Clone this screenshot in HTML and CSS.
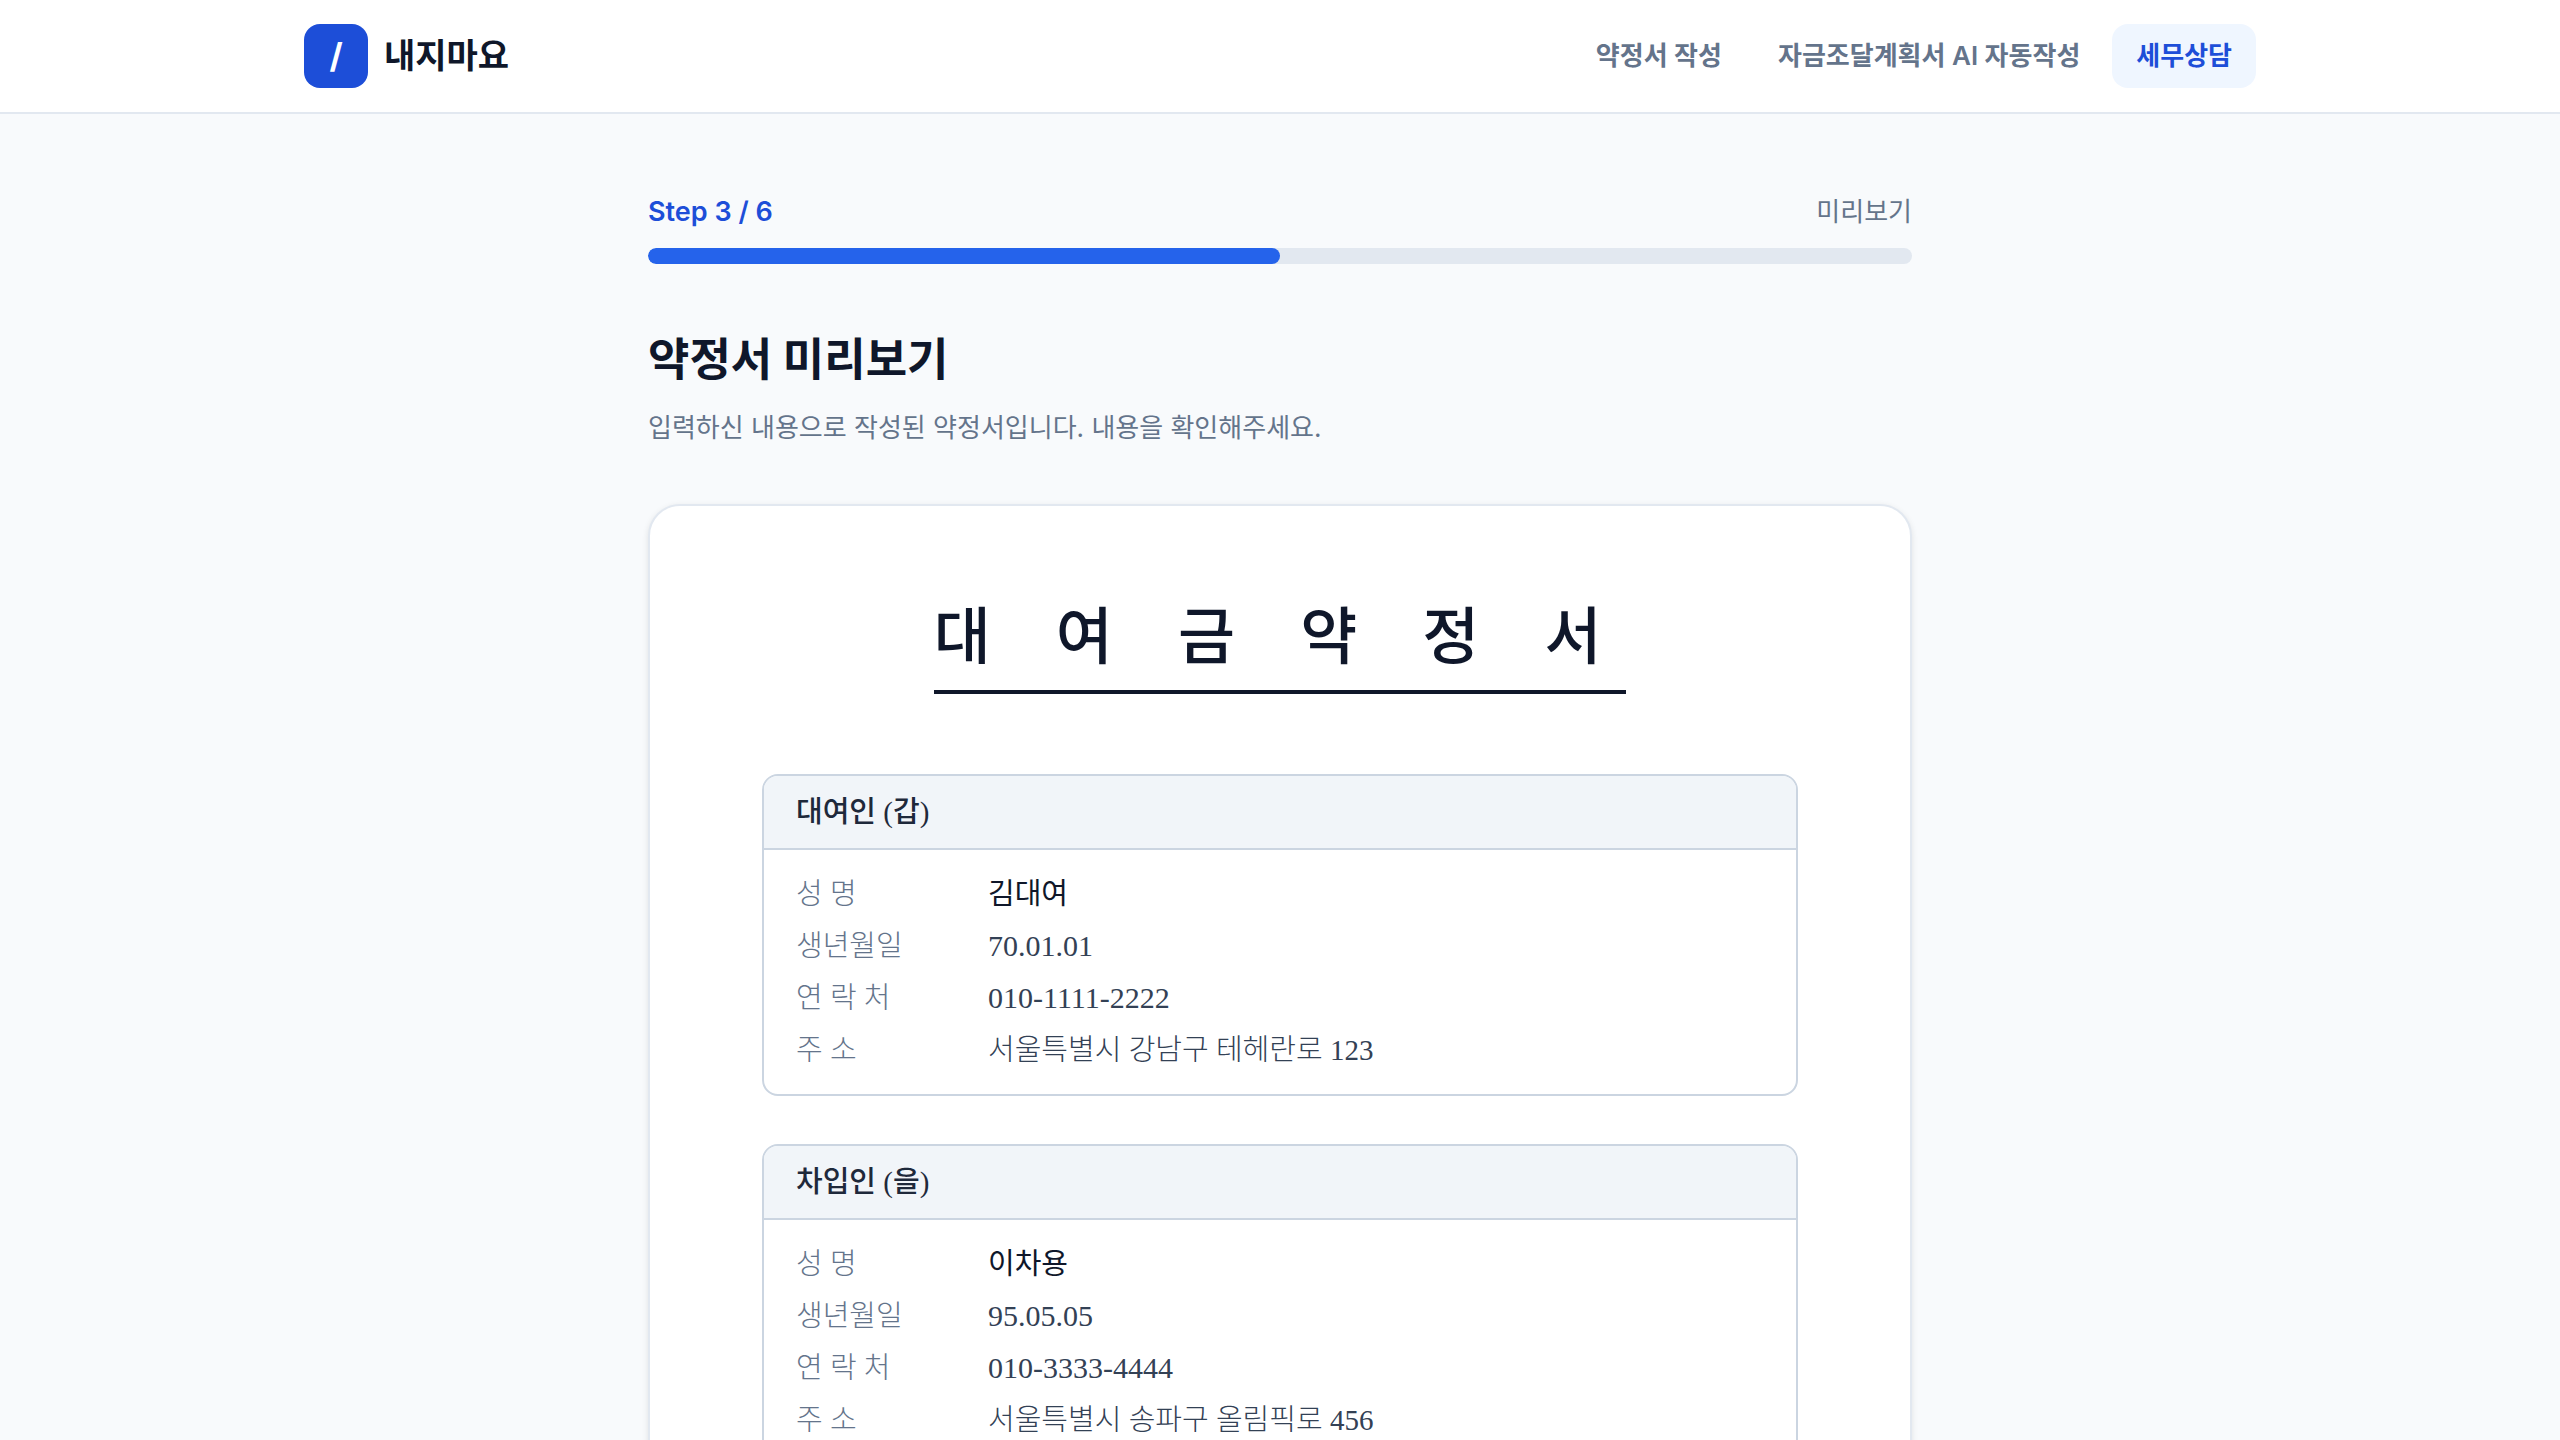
FILE: index.html
```html
<!DOCTYPE html>
<html lang="ko">
<head>
<meta charset="UTF-8">
<meta name="viewport" content="width=device-width, initial-scale=1.0">
<title>약정서 미리보기 - 내지마요</title>
<link rel="stylesheet" href="styles.css">
</head>
<body>

<header class="header">
  <div class="header-inner">
    <a class="logo" href="#">
      <span class="logo-mark">/</span>
      <span class="logo-text">내지마요</span>
    </a>
    <nav class="nav">
      <a href="#">약정서 작성</a>
      <a href="#">자금조달계획서 AI 자동작성</a>
      <a class="active" href="#">세무상담</a>
    </nav>
  </div>
</header>

<main class="main">
  <!-- 진행 단계 -->
  <div class="step">
    <span class="step-now">Step 3 / 6</span>
    <span class="step-name">미리보기</span>
  </div>
  <div class="progress" role="progressbar" aria-valuenow="3" aria-valuemin="0" aria-valuemax="6" aria-label="진행 단계">
    <div class="progress-bar" style="width: 50%"></div>
  </div>

  <h1>약정서 미리보기</h1>
  <p class="desc">입력하신 내용으로 작성된 약정서입니다. 내용을 확인해주세요.</p>

  <!-- 약정서 -->
  <article class="contract">
    <h2>대 여 금 약 정 서</h2>

    <section class="party">
      <h3>대여인 (갑)</h3>
      <dl>
        <dt>성 명</dt>
        <dd class="name">김대여</dd>
        <dt>생년월일</dt>
        <dd class="num">70.01.01</dd>
        <dt>연 락 처</dt>
        <dd class="num">010-1111-2222</dd>
        <dt>주 소</dt>
        <dd>서울특별시 강남구 테헤란로 123</dd>
      </dl>
    </section>

    <section class="party">
      <h3>차입인 (을)</h3>
      <dl>
        <dt>성 명</dt>
        <dd class="name">이차용</dd>
        <dt>생년월일</dt>
        <dd class="num">95.05.05</dd>
        <dt>연 락 처</dt>
        <dd class="num">010-3333-4444</dd>
        <dt>주 소</dt>
        <dd>서울특별시 송파구 올림픽로 456</dd>
      </dl>
    </section>
  </article>
</main>

</body>
</html>
```
FILE: styles.css
```css
* {
  box-sizing: border-box;
  margin: 0;
  padding: 0;
}

body {
  font-family: Inter, "Noto Sans CJK KR", sans-serif;
  font-size: 26px;
  line-height: 40px;
  color: #0f172a;
  background-color: #f8fafc;
}

a {
  color: inherit;
  text-decoration: none;
}

/* 상단 메뉴 */
.header {
  background-color: #fff;
  border-bottom: 2px solid #e2e8f0;
}

.header-inner {
  display: flex;
  justify-content: space-between;
  align-items: center;
  max-width: 2048px;
  margin: 0 auto;
  padding: 24px 48px;
}

.logo {
  display: flex;
  align-items: center;
  gap: 16px;
}

.logo-mark {
  display: flex;
  justify-content: center;
  align-items: center;
  width: 64px;
  height: 64px;
  border-radius: 16px;
  background-color: #1d4ed8;
  color: #fff;
  font-size: 34px;
  font-weight: 700;
}

.logo-text {
  font-size: 34px;
  font-weight: 700;
}

.nav {
  display: flex;
  gap: 8px;
}

.nav a {
  padding: 12px 24px;
  border-radius: 16px;
  color: #64748b;
  font-weight: 600;
}

.nav a.active {
  background-color: #eff6ff;
  color: #1d4ed8;
}

/* 본문 */
.main {
  max-width: 1344px;
  margin: 0 auto;
  padding: 78px 40px 96px;
}

.step {
  display: flex;
  justify-content: space-between;
  margin-bottom: 16px;
}

.step-now {
  color: #1d4ed8;
  font-size: 27px;
  font-weight: 600;
}

.step-name {
  color: #64748b;
}

.progress {
  height: 16px;
  border-radius: 8px;
  background-color: #e2e8f0;
  overflow: hidden;
}

.progress-bar {
  height: 100%;
  border-radius: 8px;
  background-color: #2563eb;
}

h1 {
  margin-top: 64px;
  font-size: 45px;
  line-height: 64px;
  font-weight: 700;
}

.desc {
  margin-top: 16px;
  color: #64748b;
}

/* 약정서 */
.contract {
  margin-top: 56px;
  padding: 96px 112px;
  border: 2px solid #e2e8f0;
  border-radius: 32px;
  background-color: #fff;
  box-shadow: 0 2px 6px rgba(0, 0, 0, 0.1);
  font-family: "Liberation Serif", "Noto Sans CJK KR", serif;
  font-size: 29px;
}

.contract h2 {
  width: fit-content;
  margin: 0 auto 80px;
  padding-bottom: 16px;
  border-bottom: 4px solid #0f172a;
  font-size: 62px;
  line-height: 72px;
  font-weight: 500;
  letter-spacing: 0.4em;
}

.party {
  border: 2px solid #cbd5e1;
  border-radius: 16px;
  overflow: hidden;
}

.party + .party {
  margin-top: 48px;
}

.party h3 {
  padding: 16px 32px;
  border-bottom: 2px solid #cbd5e1;
  background-color: #f1f5f9;
  color: #1e293b;
  font-size: 29px;
  font-weight: 500;
}

.party dl {
  display: grid;
  grid-template-columns: 192px 1fr;
  row-gap: 12px;
  padding: 24px 32px;
}

.party dt {
  color: #64748b;
  font-weight: 300;
}

.party dd {
  color: #334155;
  font-weight: 300;
}

.party dd.name {
  color: #0f172a;
  font-weight: 400;
}

.party dd.num {
  font-size: 30px;
}
```
